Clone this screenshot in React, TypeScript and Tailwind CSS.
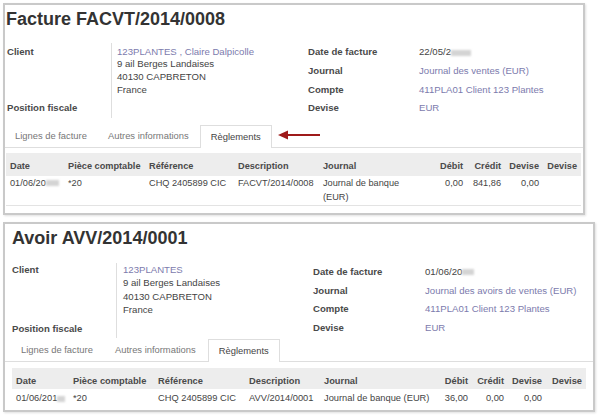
const font = "font-['Liberation_Sans',Arial,sans-serif]";

function Smudge({ w }: { w: string }) {
	return <span className={`${w} inline-block h-[6px] align-middle bg-[#d4d4d4] blur-[1px]`} />;
}

function Link({ children }: { children: React.ReactNode }) {
	return <span className="text-[#7c7bad]">{children}</span>;
}

function Arrow() {
	return (
		<svg width="44" height="12" viewBox="0 0 44 12" className="mb-[6px] ml-[4px]">
			<path d="M10 6 H43" stroke="#9e1a1a" strokeWidth="2.2" />
			<path d="M1 6 L11 1.5 L11 10.5 Z" fill="#9e1a1a" />
		</svg>
	);
}

type TabsProps = { gap: string; ml: string; arrow?: boolean };

function Tabs({ gap, ml, arrow }: TabsProps) {
	return (
		<div className={`flex items-end border-b border-[#dedede] text-[9.4px] ${gap}`}>
			<div className={`h-[22px] px-[10px] flex items-center text-[#777] ${ml}`}>
				Lignes de facture
			</div>
			<div className="h-[22px] px-[10px] flex items-center text-[#777]">
				Autres informations
			</div>
			<div className="h-[23px] -mb-px px-[10px] flex items-center bg-white border border-b-0 border-[#dedede] text-[#444]">
				Règlements
			</div>
			{arrow && <Arrow />}
		</div>
	);
}

export default function App() {
	return (
		<div className={`${font} w-[600px] h-[416px] bg-white pl-[3px] pt-[3px] text-[#4a4a4a]`}>
			{/* Facture */}
			<section className="w-[582px] h-[212px] border-2 border-[#c9c9c9] shadow-[1px_1px_2px_rgba(0,0,0,0.12)] bg-white">
				<h1 className="pl-[1px] pt-[3px] text-[18px] leading-[22px] font-bold text-[#333]">
					Facture FACVT/2014/0008
				</h1>

				<div className="mt-[13px] flex text-[9.6px]">
					<div className="w-[303px] grid grid-cols-[106px_1fr]">
						<div className="pl-[2px] pt-[2.5px] font-bold leading-[12.8px]">Client</div>
						<div className="border-l border-[#dedede] pl-[5px] pt-[2.5px] pb-[3px] leading-[12.8px] text-[#444]">
							<div>
								<Link>123PLANTES , Claire Dalpicolle</Link>
							</div>
							<div>9 ail Berges Landaises</div>
							<div>40130 CAPBRETON</div>
							<div>France</div>
						</div>
						<div className="pl-[2px] pt-[2px] font-bold leading-[12.8px]">Position fiscale</div>
						<div className="border-l border-[#dedede] pt-[2px] pb-[3px] leading-[12.8px]">&nbsp;</div>
					</div>

					<div className="grid grid-cols-[111px_1fr] auto-rows-[18.7px] items-center">
						<div className="font-bold">Date de facture</div>
						<div className="text-[#444]">
							22/05/2<Smudge w="w-[20px]" />
						</div>
						<div className="font-bold">Journal</div>
						<div>
							<Link>Journal des ventes (EUR)</Link>
						</div>
						<div className="font-bold">Compte</div>
						<div>
							<Link>411PLA01 Client 123 Plantes</Link>
						</div>
						<div className="font-bold">Devise</div>
						<div>
							<Link>EUR</Link>
						</div>
					</div>
				</div>

				<div className="mt-[7px]">
					<Tabs gap="gap-[1px]" ml="ml-0" arrow />
				</div>

				<div className="mt-[5px] ml-[1px] w-[575px] text-[9.2px]">
					<div className="grid grid-cols-[58px_81px_89px_85px_106px_42px_38px_38px_38px] bg-[#ededed] font-bold leading-[12px] whitespace-nowrap [&>div]:px-[4px] [&>div]:pt-[7px] [&>div]:pb-[4px]">
						<div>Date</div>
						<div>Pièce comptable</div>
						<div>Référence</div>
						<div>Description</div>
						<div>Journal</div>
						<div className="text-right">Débit</div>
						<div className="text-right">Crédit</div>
						<div className="text-right">Devise</div>
						<div className="text-right">Devise</div>
					</div>
					<div className="grid grid-cols-[58px_81px_89px_85px_106px_42px_38px_38px_38px] leading-[14.5px] border-b border-[#e3e3e3] [&>div]:px-[4px] text-[#444]">
						<div className="whitespace-nowrap">
							01/06/20<Smudge w="w-[13px]" />
						</div>
						<div>*20</div>
						<div className="whitespace-nowrap">CHQ 2405899 CIC</div>
						<div className="whitespace-nowrap">FACVT/2014/0008</div>
						<div className="pr-[20px]">Journal de banque (EUR)</div>
						<div className="text-right">0,00</div>
						<div className="text-right">841,86</div>
						<div className="text-right">0,00</div>
						<div />
					</div>
				</div>
			</section>

			{/* Avoir */}
			<section className="mt-[7px] w-[592px] h-[190px] border-2 border-[#c9c9c9] shadow-[1px_1px_2px_rgba(0,0,0,0.12)] bg-white">
				<h1 className="pl-[7px] pt-[2.5px] text-[18px] leading-[22px] font-bold text-[#333]">
					Avoir AVV/2014/0001
				</h1>

				<div className="mt-[14px] flex text-[9.6px]">
					<div className="w-[308px] grid grid-cols-[111px_1fr]">
						<div className="pl-[7px] pt-[0.5px] font-bold leading-[13.4px]">Client</div>
						<div className="border-l border-[#dedede] pl-[6px] pt-[0.5px] pb-[2px] leading-[13.4px] text-[#444]">
							<div>
								<Link>123PLANTES</Link>
							</div>
							<div>9 ail Berges Landaises</div>
							<div>40130 CAPBRETON</div>
							<div>France</div>
						</div>
						<div className="pl-[7px] pt-[2px] font-bold leading-[13.4px]">Position fiscale</div>
						<div className="border-l border-[#dedede] pt-[2px] pb-[1px] leading-[13.4px]">&nbsp;</div>
					</div>

					<div className="grid grid-cols-[112px_1fr] auto-rows-[18.8px] items-center">
						<div className="font-bold">Date de facture</div>
						<div className="text-[#444]">
							01/06/20<Smudge w="w-[12px]" />
						</div>
						<div className="font-bold">Journal</div>
						<div>
							<Link>Journal des avoirs de ventes (EUR)</Link>
						</div>
						<div className="font-bold">Compte</div>
						<div>
							<Link>411PLA01 Client 123 Plantes</Link>
						</div>
						<div className="font-bold">Devise</div>
						<div>
							<Link>EUR</Link>
						</div>
					</div>
				</div>

				<div className="mt-[1.5px]">
					<Tabs gap="gap-[2px]" ml="ml-[6px]" />
				</div>

				<div className="mt-[6px] ml-[7px] w-[574px] text-[9.3px]">
					<div className="grid grid-cols-[57px_85px_91px_75px_118px_34px_36px_38px_40px] bg-[#ededed] font-bold leading-[12px] whitespace-nowrap [&>div]:px-[4px] [&>div]:pt-[6.5px] [&>div]:pb-[2.5px]">
						<div>Date</div>
						<div>Pièce comptable</div>
						<div>Référence</div>
						<div>Description</div>
						<div>Journal</div>
						<div className="text-right">Débit</div>
						<div className="text-right">Crédit</div>
						<div className="text-right">Devise</div>
						<div className="text-right">Devise</div>
					</div>
					<div className="grid grid-cols-[57px_85px_91px_75px_118px_34px_36px_38px_40px] leading-[14px] [&>div]:px-[4px] [&>div]:pt-[2px] text-[#444] whitespace-nowrap">
						<div>
							01/06/201<Smudge w="w-[8px]" />
						</div>
						<div>*20</div>
						<div>CHQ 2405899 CIC</div>
						<div>AVV/2014/0001</div>
						<div>Journal de banque (EUR)</div>
						<div className="text-right">36,00</div>
						<div className="text-right">0,00</div>
						<div className="text-right">0,00</div>
						<div />
					</div>
				</div>
			</section>
		</div>
	);
}
